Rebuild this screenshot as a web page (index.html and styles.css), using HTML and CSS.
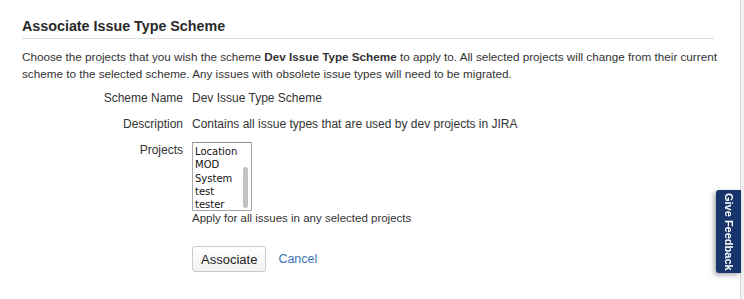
FILE: index.html
```html
<!DOCTYPE html>
<html lang="en">
<head>
  <meta charset="UTF-8" />
  <title>Associate Issue Type Scheme</title>
  <link rel="stylesheet" href="styles.css">
</head>
<body>
  <div class="page">
    <h2 class="title">Associate Issue Type Scheme</h2>
    <p class="intro">Choose the projects that you wish the scheme <strong>Dev Issue Type Scheme</strong> to apply to. All selected projects will change from their current scheme to the selected scheme. Any issues with obsolete issue types will need to be migrated.</p>
    <form class="assoc-form">
      <div class="row">
        <div class="label">Scheme Name</div>
        <div class="value">Dev Issue Type Scheme</div>
      </div>
      <div class="row">
        <div class="label">Description</div>
        <div class="value">Contains all issue types that are used by dev projects in JIRA</div>
      </div>
      <div class="row">
        <div class="label">Projects</div>
        <div class="value">
          <div class="listbox">
            <div class="options">
              <div>Location</div>
              <div>MOD</div>
              <div>System</div>
              <div>test</div>
              <div>tester</div>
            </div>
            <div class="scroll"><span class="thumb"></span></div>
          </div>
          <div class="hint">Apply for all issues in any selected projects</div>
        </div>
      </div>
      <div class="actions">
        <button type="button" class="btn">Associate</button>
        <a href="#" class="cancel">Cancel</a>
      </div>
    </form>
  </div>
  <div class="feedback"><span>Give Feedback</span></div>
</body>
</html>
```

FILE: styles.css
```css
* {
  margin: 0;
  padding: 0;
  box-sizing: border-box;
}
html {
  background: #f2f2f2;
}
body {
  font-family: "Liberation Sans", Arial, sans-serif;
  font-size: 12px;
  color: #333;
  width: 741px;
  min-height: 299px;
  background: #fff;
  border-right: 1px solid #dcdcdc;
}
.page {
  padding: 17px 23px 0 22px;
}
.title {
  font-size: 14.3px;
  font-weight: bold;
  color: #292929;
  line-height: 18px;
  margin-right: 3px;
  padding-bottom: 3px;
  border-bottom: 1px solid #ddd;
}
.intro {
  margin-top: 9px;
  font-size: 11.7px;
  line-height: 17px;
}
.assoc-form {
  margin-top: 8px;
}
.row {
  display: flex;
  margin-bottom: 9px;
}
.label {
  width: 170px;
  text-align: right;
  padding-right: 9px;
  line-height: 17px;
}
.value {
  line-height: 17px;
}
.listbox {
  display: flex;
  width: 60px;
  height: 69px;
  border: 1px solid #a8a8a8;
  border-top-color: #8e8e8e;
  background: #fff;
}
.options {
  flex: 1;
  padding: 2px 0 0 2px;
  font-family: "DejaVu Sans", Verdana, sans-serif;
  font-size: 10px;
  line-height: 13.3px;
  color: #111;
}
.scroll {
  width: 8px;
  padding: 24px 3px 2px 0;
  display: flex;
}
.thumb {
  flex: 1;
  background: #c2c2c2;
  border-radius: 3px;
}
.hint {
  font-size: 11.5px;
  line-height: 14px;
}
.actions {
  display: flex;
  align-items: center;
  gap: 12px;
  padding-left: 170px;
  margin-top: 21px;
}
.btn {
  font-family: "Liberation Sans", Arial, sans-serif;
  font-size: 13px;
  color: #222;
  height: 26px;
  padding: 0 8px;
  border: 1px solid #ccc;
  border-radius: 3px;
  background: linear-gradient(#fff, #f2f2f2);
}
.cancel {
  font-size: 12.5px;
  color: #3b73af;
  text-decoration: none;
}
.feedback {
  position: fixed;
  top: 190px;
  left: 716px;
  width: 25px;
  height: 83px;
  background: #17346b;
  border-radius: 3px 0 0 3px;
  box-shadow: -2px 2px 5px rgba(0, 0, 0, 0.35);
  display: flex;
  align-items: center;
  justify-content: center;
}
.feedback span {
  writing-mode: vertical-rl;
  color: #fff;
  font-weight: bold;
  font-size: 11px;
  white-space: nowrap;
}
```
